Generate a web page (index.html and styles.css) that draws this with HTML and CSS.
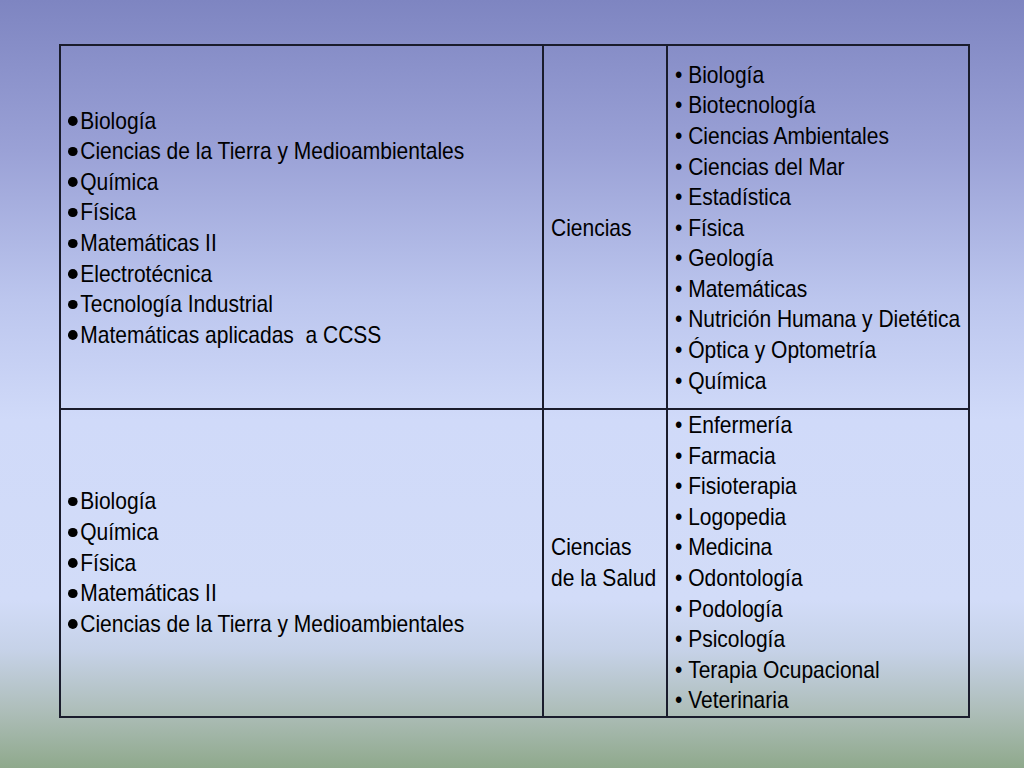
FILE: index.html
```html
<!DOCTYPE html>
<html lang="es">
<head>
<meta charset="utf-8">
<title>Ciencias</title>
<link rel="stylesheet" href="styles.css">
</head>
<body>
<div class="slide">
  <table class="grid">
    <colgroup>
      <col class="k1">
      <col class="k2">
      <col class="k3">
    </colgroup>
    <tr class="row-a">
      <td>
        <ul class="dots narrow">
          <li>Biología</li>
          <li>Ciencias de la Tierra y Medioambientales</li>
          <li>Química</li>
          <li>Física</li>
          <li>Matemáticas II</li>
          <li>Electrotécnica</li>
          <li>Tecnología Industrial</li>
          <li>Matemáticas aplicadas&nbsp; a CCSS</li>
        </ul>
      </td>
      <td><div class="narrow">Ciencias</div></td>
      <td>
        <ul class="bul narrow">
          <li>Biología</li>
          <li>Biotecnología</li>
          <li>Ciencias Ambientales</li>
          <li>Ciencias del Mar</li>
          <li>Estadística</li>
          <li>Física</li>
          <li>Geología</li>
          <li>Matemáticas</li>
          <li>Nutrición Humana y Dietética</li>
          <li>Óptica y Optometría</li>
          <li>Química</li>
        </ul>
      </td>
    </tr>
    <tr class="row-b">
      <td>
        <ul class="dots narrow">
          <li>Biología</li>
          <li>Química</li>
          <li>Física</li>
          <li>Matemáticas II</li>
          <li>Ciencias de la Tierra y Medioambientales</li>
        </ul>
      </td>
      <td><div class="narrow">Ciencias<br>de la Salud</div></td>
      <td>
        <ul class="bul narrow">
          <li>Enfermería</li>
          <li>Farmacia</li>
          <li>Fisioterapia</li>
          <li>Logopedia</li>
          <li>Medicina</li>
          <li>Odontología</li>
          <li>Podología</li>
          <li>Psicología</li>
          <li>Terapia Ocupacional</li>
          <li>Veterinaria</li>
        </ul>
      </td>
    </tr>
  </table>
</div>
</body>
</html>
```

FILE: styles.css
```css
html, body {
  margin: 0;
  padding: 0;
}
body {
  width: 1024px;
  height: 768px;
  overflow: hidden;
  background: linear-gradient(to bottom,
    #7e85c1 0px,
    #9aa1d6 150px,
    #bcc6ee 300px,
    #d0daf9 420px,
    #d2dcf8 600px,
    #c6d2e8 650px,
    #aebeba 710px,
    #8fa98c 768px);
  font-family: "Liberation Sans", Arial, sans-serif;
  color: #000;
}
.slide {
  padding: 44px 0 0 59px;
}
.grid {
  border-collapse: collapse;
  table-layout: fixed;
  width: 909px;
  font-size: 24px;
  line-height: 30.6px;
}
.k1 { width: 483px; }
.k2 { width: 124px; }
.k3 { width: 302px; }
.grid td {
  border: 2px solid #1a1c2c;
  vertical-align: middle;
  padding: 0 0 0 7px;
  overflow: visible;
}
.row-a td {
  padding-top: 2px;
}
.row-a {
  height: 364px;
}
.row-b {
  height: 305px;
}
.narrow {
  transform: scaleX(0.875);
  transform-origin: 0 50%;
  white-space: nowrap;
}
ul {
  list-style: none;
  margin: 0;
  padding: 0;
}
.dots li::before {
  content: "";
  display: inline-block;
  width: 11px;
  height: 9.5px;
  border-radius: 50%;
  background: #000;
  margin-right: 3px;
  vertical-align: 3px;
}
.bul li::before {
  content: "\2022\00a0";
}
```
